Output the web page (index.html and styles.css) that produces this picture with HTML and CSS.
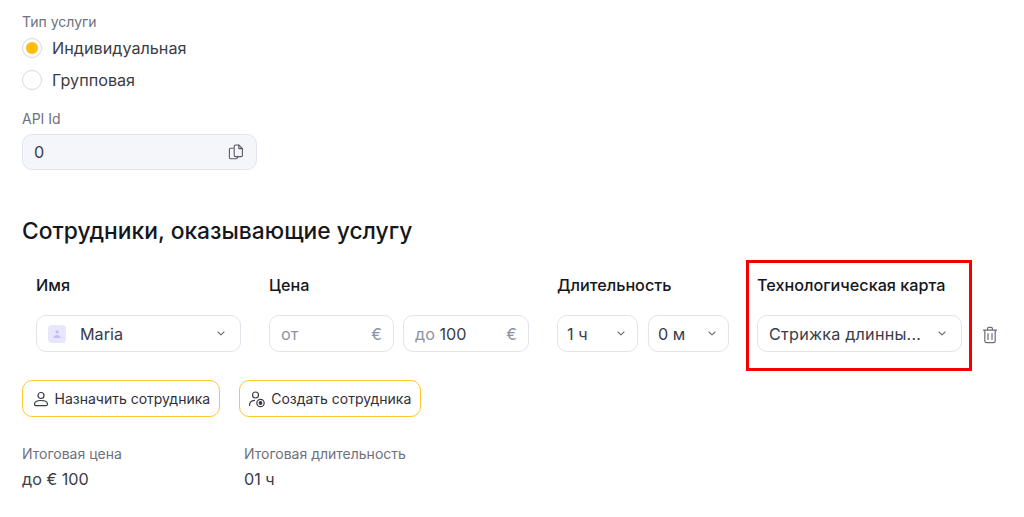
FILE: index.html
```html
<!DOCTYPE html>
<html lang="ru">
<head>
<meta charset="utf-8">
<title>Услуга</title>
<link rel="stylesheet" href="styles.css">
</head>
<body>
<main class="page">
  <div class="label">Тип услуги</div>
  <div class="radio-row"><span class="radio radio-on"></span><span>Индивидуальная</span></div>
  <div class="radio-row"><span class="radio"></span><span>Групповая</span></div>

  <div class="label api-label">API Id</div>
  <div class="api-field">
    <span>0</span>
    <svg class="copy" width="16" height="16" viewBox="0 0 16 16" fill="none" stroke="#55596a" stroke-width="1.1" stroke-linejoin="round" stroke-linecap="round">
      <path d="M5.200 4.200H2.600a1.200 1.200 0 0 0-1.200 1.200v8.200a1.200 1.200 0 0 0 1.200 1.200h5.600a1.200 1.200 0 0 0 1.200-1.200v-1.200"/>
      <path d="M5.200 2.600a1.200 1.200 0 0 1 1.200-1.200h3.400l3.600 3.600v.2v6.600a1.200 1.200 0 0 1-1.200 1.200H6.400a1.200 1.200 0 0 1-1.200-1.200z" transform="translate(1 -.4)"/>
      <path d="M10.800 1.200v3.400h3.600"/>
    </svg>
  </div>

  <h2 class="title">Сотрудники, оказывающие услугу</h2>

  <div class="staff-row">
    <div class="col col-name">
      <div class="col-label">Имя</div>
      <div class="field">
        <span class="avatar">
          <svg width="10" height="10" viewBox="0 0 10 10" fill="#c2c0f2"><circle cx="5" cy="3" r="1.700"/><path d="M1.600 9c0-2 1.500-3.100 3.400-3.100S8.400 7 8.400 9z"/></svg>
        </span>
        <span class="grow">Maria</span>
        <svg class="chev" width="8" height="5" viewBox="0 0 8 5" fill="none" stroke="#6b6f7c" stroke-width="1.100" stroke-linecap="round" stroke-linejoin="round"><path d="M1 1l3 2.900L7 1"/></svg>
      </div>
    </div>

    <div class="col col-price">
      <div class="col-label">Цена</div>
      <div class="pair pair-price">
        <div class="field field-from"><span class="muted grow">от</span><span class="euro">€</span></div>
        <div class="field field-to"><span class="muted">до&nbsp;</span><span class="grow">100</span><span class="euro">€</span></div>
      </div>
    </div>

    <div class="col col-time">
      <div class="col-label">Длительность</div>
      <div class="pair">
        <div class="field field-time"><span class="grow">1 ч</span>
          <svg class="chev" width="8" height="5" viewBox="0 0 8 5" fill="none" stroke="#6b6f7c" stroke-width="1.100" stroke-linecap="round" stroke-linejoin="round"><path d="M1 1l3 2.900L7 1"/></svg>
        </div>
        <div class="field field-time"><span class="grow">0 м</span>
          <svg class="chev" width="8" height="5" viewBox="0 0 8 5" fill="none" stroke="#6b6f7c" stroke-width="1.100" stroke-linecap="round" stroke-linejoin="round"><path d="M1 1l3 2.900L7 1"/></svg>
        </div>
      </div>
    </div>

    <div class="col-card">
      <div class="col-label">Технологическая карта</div>
      <div class="field">
        <span class="grow ellipsis">Стрижка длинны...</span>
        <svg class="chev" width="8" height="5" viewBox="0 0 8 5" fill="none" stroke="#6b6f7c" stroke-width="1.100" stroke-linecap="round" stroke-linejoin="round"><path d="M1 1l3 2.900L7 1"/></svg>
      </div>
    </div>

    <svg class="trash" width="16" height="18" viewBox="0 0 16 18" fill="none" stroke="#6b6f7c" stroke-width="1.200" stroke-linecap="round" stroke-linejoin="round">
      <path d="M1.500 4.200h13M5.600 4V2.400a1 1 0 0 1 1-1h2.800a1 1 0 0 1 1 1V4"/>
      <path d="M2.800 4.300v10.600a1.700 1.700 0 0 0 1.700 1.700h7a1.700 1.700 0 0 0 1.700-1.700V4.300"/>
      <path d="M6 7.500v6M10 7.500v6"/>
    </svg>
  </div>

  <div class="actions">
    <button class="btn" type="button">
      <svg width="18" height="18" viewBox="0 0 18 18" fill="none" stroke="#3a3c46" stroke-width="1.200" stroke-linecap="round" stroke-linejoin="round"><circle cx="9" cy="5.500" r="3"/><path d="M2.500 14.200c0-2.400 2.900-3.700 6.500-3.700s6.500 1.300 6.500 3.700c0 1-.7 1.500-1.700 1.500H4.200c-1 0-1.700-.5-1.700-1.500z"/></svg>
      Назначить сотрудника
    </button>
    <button class="btn" type="button">
      <svg width="18" height="18" viewBox="0 0 18 18" fill="none" stroke="#3a3c46" stroke-width="1.200" stroke-linecap="round" stroke-linejoin="round"><circle cx="7.500" cy="5" r="3"/><path d="M1.500 15.500c0-3 2-5 5-5.200"/><circle cx="12.500" cy="13" r="3.700"/><circle cx="12.500" cy="13" r="1.300" fill="#3a3c46"/></svg>
      Создать сотрудника
    </button>
  </div>

  <div class="totals">
    <div class="total-price">
      <div class="label">Итоговая цена</div>
      <div class="total-value">до € 100</div>
    </div>
    <div>
      <div class="label">Итоговая длительность</div>
      <div class="total-value">01 ч</div>
    </div>
  </div>
</main>
</body>
</html>
```
FILE: styles.css
```css
* { box-sizing: border-box; }

html, body { margin: 0; background: #fff; }

body {
  font-family: Inter, "Liberation Sans", sans-serif;
  color: #3a3c46;
  overflow: hidden;
}

.page { height: 517px; padding: 12px 0 0 22px; }

.label { font-size: 14px; line-height: 20px; color: #6e717d; }

.radio-row {
  display: flex;
  align-items: center;
  gap: 10px;
  height: 32px;
  font-size: 16.2px;
}

.radio {
  width: 20px;
  height: 20px;
  border: 1.5px solid #d5d7e3;
  border-radius: 50%;
  background: #fff;
  display: flex;
  align-items: center;
  justify-content: center;
}

.radio-on::after {
  content: "";
  width: 12px;
  height: 12px;
  border-radius: 50%;
  background: #ffbc0a;
}

.api-label { margin-top: 13px; }

.api-field {
  display: flex;
  align-items: center;
  justify-content: space-between;
  width: 235px;
  height: 36px;
  margin-top: 5px;
  padding: 0 12px 0 11px;
  background: #f5f6fa;
  border: 1.5px solid #e1e3ef;
  border-radius: 10px;
  font-size: 16.2px;
}

.title {
  margin: 45px 0 0;
  font-size: 22.8px;
  line-height: 32px;
  font-weight: 500;
  color: #16171c;
}

.staff-row {
  display: flex;
  align-items: flex-start;
  margin-top: 13px;
  padding-left: 14px;
}

.col { padding-top: 15px; }
.col-name { width: 205px; margin-right: 28px; }
.col-price { width: 260px; margin-right: 28px; }
.col-time { width: 172px; margin-right: 17px; }

.col-card {
  width: 226px;
  padding: 12px 7px 16px 8px;
  border: 3px solid #f40000;
}

.col-label {
  font-size: 16.2px;
  line-height: 20px;
  font-weight: 500;
  color: #16171c;
  margin-bottom: 20px;
}

.field {
  display: flex;
  align-items: center;
  height: 37px;
  padding: 0 15.5px 0 11px;
  border: 1.5px solid #e1e3ef;
  border-radius: 10px;
  background: #fff;
  font-size: 16.2px;
}

.grow { flex: 1; min-width: 0; }
.ellipsis { white-space: nowrap; overflow: hidden; letter-spacing: 0.2px; }

.avatar {
  display: flex;
  align-items: center;
  justify-content: center;
  width: 18px;
  height: 18px;
  margin-right: 14px;
  border-radius: 4px;
  background: #e7e6fd;
}

.pair { display: flex; gap: 10px; }
.pair-price { gap: 9px; }

.field-from { width: 125px; padding-right: 11px; }
.field-to { width: 126px; padding-right: 11px; }
.field-time { width: 81px; padding: 0 12.5px 0 9px; }

.muted { color: #8d93a5; }
.euro { color: #8d93a5; }

.trash { margin: 66px 0 0 10px; }

.actions {
  display: flex;
  gap: 19px;
  margin-top: 9px;
}

.btn {
  display: flex;
  align-items: center;
  gap: 5px;
  height: 37px;
  padding: 0 8.5px;
  background: #fff;
  border: 1.5px solid #ffc62e;
  border-radius: 10px;
  font: 400 14px/20px Inter, "Liberation Sans", sans-serif;
  color: #2f3039;
}

.totals { display: flex; margin-top: 27px; }
.total-price { width: 222px; }

.total-value { margin-top: 5px; font-size: 16.2px; line-height: 20px; }
```
